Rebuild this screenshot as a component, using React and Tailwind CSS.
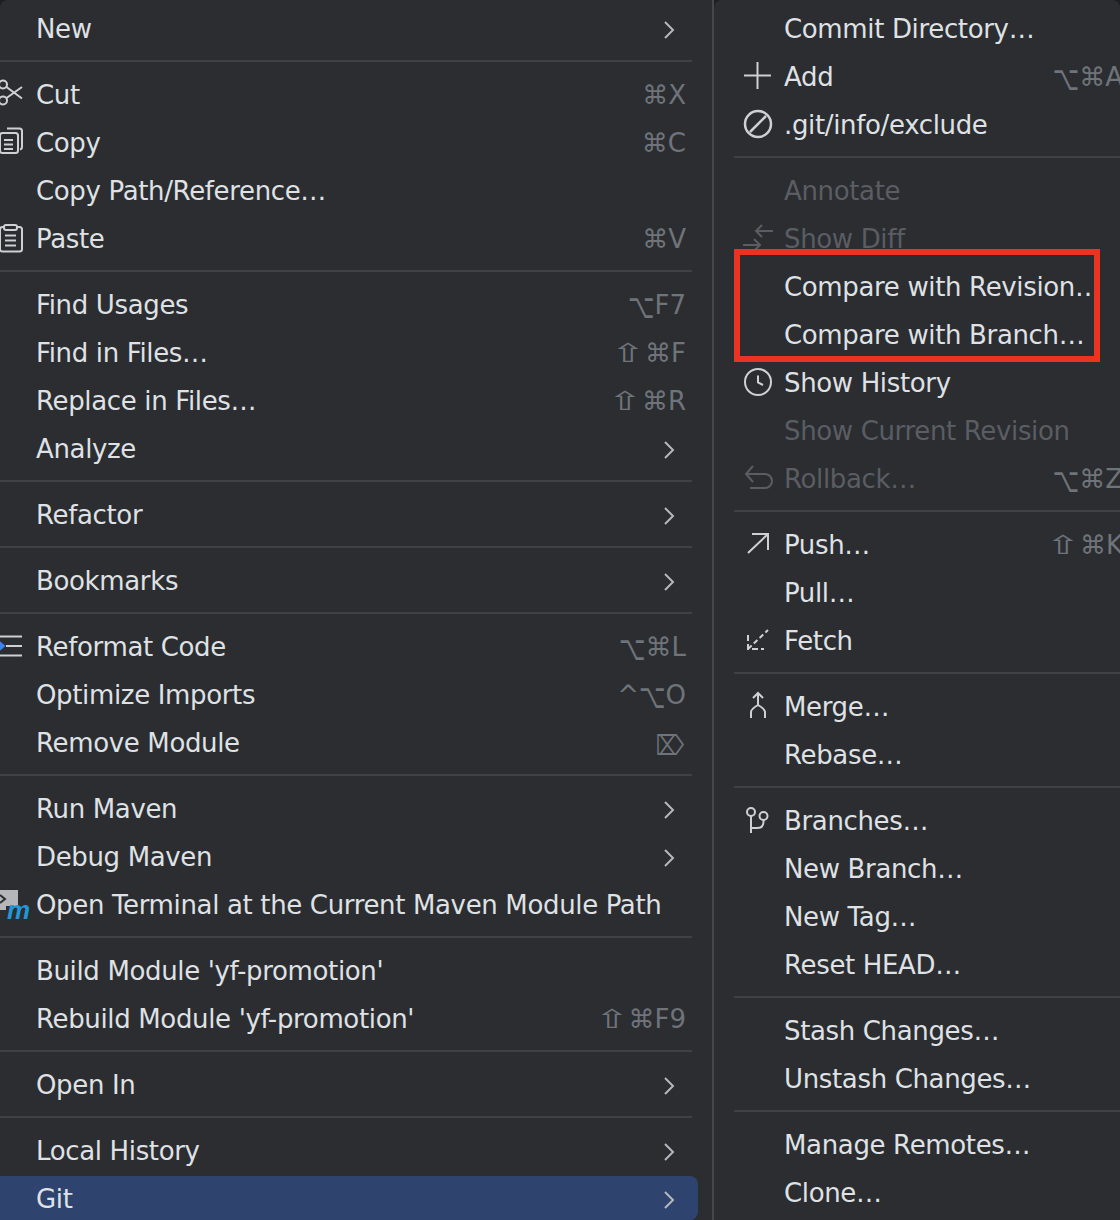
import React from "react";

const S = { fill: "none", stroke: "currentColor", strokeWidth: 2 };

// Menu icons, drawn on a 32px box
const icons = {
  scissors: (
    <g {...S}>
      <circle cx="13" cy="6.500" r="4" />
      <circle cx="13" cy="22.500" r="4" />
      <path d="M16.500 9L32 20.500M16.500 20L32 9" />
    </g>
  ),
  copy: (
    <g {...S}>
      <rect x="10" y="7" width="18" height="20" rx="2.5" />
      <path d="M17 2.500H29.500Q32 2.500 32 5V21Q32 23 30 23.500" />
      <path d="M14 14H23M14 18.500H23M14 23H23" />
    </g>
  ),
  paste: (
    <g {...S}>
      <path d="M14 5H12.500Q10 5 10 7.500V27Q10 29.500 12.500 29.500H29.500Q32 29.500 32 27V7.500Q32 5 29.500 5H27" />
      <rect x="14" y="3" width="13" height="5" rx="2" />
      <path d="M15 13.500H26M15 18.500H26M15 23.500H26" />
    </g>
  ),
  reformat: (
    <g>
      <path {...S} d="M9 6.500H32M16 16H32M9 25.500H32" />
      <path d="M9 10.500L15.500 16L9 21.500Z" fill="#3b82f6" />
    </g>
  ),
  maven: (
    <g>
      <rect x="10" y="2" width="18" height="20" fill="#b4b6ba" />
      <path d="M10 7L15 11L10 15" fill="none" stroke="#2b2d30" strokeWidth="2" />
      <rect x="16" y="18" width="16" height="6" fill="#2b2d30" />
      <text x="17" y="31" fontSize="26" fontStyle="italic" fontWeight="700" fill="#2396d8" fontFamily="'Liberation Sans', sans-serif">m</text>
    </g>
  ),
  plus: <path {...S} d="M2 15.500H29M15.500 2V29" />,
  exclude: (
    <g {...S} strokeWidth="2.500">
      <circle cx="16" cy="16" r="13" />
      <path d="M8 24L24 8" />
    </g>
  ),
  diff: <path {...S} d="M14 9H31M20 3L14 9L20 15M1 23H18M12 17L18 23L12 29" />,
  clock: (
    <g {...S}>
      <circle cx="16" cy="16" r="13" />
      <path d="M16 9.500V16.500L21 19" />
    </g>
  ),
  rollback: <path {...S} d="M11 4L4 12L11 20M4 12H23A7 7 0 0 1 23 26H8" />,
  push: <path {...S} d="M6 25L26 6M10 6H26V22" />,
  fetch: (
    <g {...S}>
      <path d="M6 25L26 6" strokeDasharray="5 3" />
      <path d="M6 11V25H22" strokeDasharray="6 3" />
    </g>
  ),
  merge: <path {...S} d="M16 3V15M11 8L16 3L21 8M9 28V22Q9 19 16 15Q23 19 23 22V28" />,
  branch: (
    <g {...S}>
      <circle cx="9" cy="8" r="4" />
      <circle cx="21.500" cy="12" r="4" />
      <path d="M9 12V29M21.500 16V18Q21.500 24 15 24H9" />
    </g>
  ),
};

const leftMenu = [
  { label: "New", arrow: true },
  "sep",
  { label: "Cut", icon: "scissors", keys: "⌘X" },
  { label: "Copy", icon: "copy", keys: "⌘C" },
  { label: "Copy Path/Reference…" },
  { label: "Paste", icon: "paste", keys: "⌘V" },
  "sep",
  { label: "Find Usages", keys: "⌥F7" },
  { label: "Find in Files…", keys: "⇧⌘F" },
  { label: "Replace in Files…", keys: "⇧⌘R" },
  { label: "Analyze", arrow: true },
  "sep",
  { label: "Refactor", arrow: true },
  "sep",
  { label: "Bookmarks", arrow: true },
  "sep",
  { label: "Reformat Code", icon: "reformat", keys: "⌥⌘L" },
  { label: "Optimize Imports", keys: "^⌥O" },
  { label: "Remove Module", keys: "⌦" },
  "sep",
  { label: "Run Maven", arrow: true },
  { label: "Debug Maven", arrow: true },
  { label: "Open Terminal at the Current Maven Module Path", icon: "maven" },
  "sep",
  { label: "Build Module 'yf-promotion'" },
  { label: "Rebuild Module 'yf-promotion'", keys: "⇧⌘F9" },
  "sep",
  { label: "Open In", arrow: true },
  "sep",
  { label: "Local History", arrow: true },
  { label: "Git", arrow: true, active: true },
];

const rightMenu = [
  { label: "Commit Directory…" },
  { label: "Add", icon: "plus", keys: "⌥⌘A" },
  { label: ".git/info/exclude", icon: "exclude" },
  "sep",
  { label: "Annotate", disabled: true },
  { label: "Show Diff", icon: "diff", disabled: true },
  { label: "Compare with Revision…" },
  { label: "Compare with Branch…" },
  { label: "Show History", icon: "clock" },
  { label: "Show Current Revision", disabled: true },
  { label: "Rollback…", icon: "rollback", keys: "⌥⌘Z", disabled: true },
  "sep",
  { label: "Push…", icon: "push", keys: "⇧⌘K" },
  { label: "Pull…" },
  { label: "Fetch", icon: "fetch" },
  "sep",
  { label: "Merge…", icon: "merge" },
  { label: "Rebase…" },
  "sep",
  { label: "Branches…", icon: "branch" },
  { label: "New Branch…" },
  { label: "New Tag…" },
  { label: "Reset HEAD…" },
  "sep",
  { label: "Stash Changes…" },
  { label: "Unstash Changes…" },
  "sep",
  { label: "Manage Remotes…" },
  { label: "Clone…" },
];

// The mac modifier glyphs differ in size from the letters next to them
function Keys({ keys }) {
  return [...keys].map((ch, i) => {
    if (ch === "⇧") return <span key={i} className="inline-block scale-x-[1.6] ml-[4px] mr-[6px]">{ch}</span>;
    if (ch === "⌥") return <span key={i} className="inline-block text-[23px] scale-y-[1.5]">{ch}</span>;
    if (ch === "⌦") return <span key={i} className="inline-block text-[20px] scale-y-[1.4] mr-[2px]">{ch}</span>;
    return <span key={i}>{ch}</span>;
  });
}

function MenuItem({ item, side }) {
  const left = side === "left";
  return (
    <div className={`h-12 py-0.5 ${left ? "w-[698px]" : "w-[409px]"}`}>
      <div className={`h-11 flex items-center rounded-r-lg ${item.active ? "bg-[#2e436e]" : ""}`}>
        <div className={`flex shrink-0 justify-end ${left ? "w-[36px] pr-[14px]" : "w-[70px] pr-[10px]"}`}>
          {item.icon && (
            <svg
              viewBox="0 0 32 32"
              className={`w-8 h-8 shrink-0 overflow-visible ${item.disabled ? "text-[#5a5d63]" : "text-[#ced0d6]"}`}
            >
              {icons[item.icon]}
            </svg>
          )}
        </div>
        <span className={`flex-1 pt-0.5 whitespace-nowrap tracking-[-0.35px] ${item.disabled ? "text-[#5a5d63]" : "text-[#dfe1e5]"}`}>
          {item.label}
        </span>
        {item.keys && (
          <span className={`whitespace-nowrap pt-0.5 text-[#6f737a] ${left ? "pr-[12px]" : ""}`}>
            <Keys keys={item.keys} />
          </span>
        )}
        {item.arrow && (
          <svg viewBox="0 0 12 18" className="w-3 h-[18px] mr-[23px] mt-1 text-[#b4b8bf]">
            <path d="M2 1L10 9L2 17" fill="none" stroke="currentColor" strokeWidth="2" />
          </svg>
        )}
      </div>
    </div>
  );
}

function Menu({ items, side }) {
  return (
    <div className="pt-1">
      {items.map((item, i) =>
        item === "sep" ? (
          <div key={i} className="py-2">
            <div className={`h-0.5 bg-[#3f4144] ${side === "left" ? "w-[692px]" : "ml-[20px]"}`} />
          </div>
        ) : (
          <MenuItem key={i} item={item} side={side} />
        )
      )}
    </div>
  );
}

export default function App() {
  return (
    <div className="relative w-[1120px] h-[1220px] overflow-hidden flex bg-[#1e1f22] font-['DejaVu_Sans',sans-serif] text-[26px]">
      {/* Main context menu */}
      <div className="w-[712px] h-full overflow-hidden bg-[#2b2d30] rounded-tl-lg">
        <Menu items={leftMenu} side="left" />
      </div>
      <div className="w-0.5 bg-[#45474a]" />

      {/* Git submenu */}
      <div className="flex-1 h-full overflow-hidden bg-[#2b2d30] rounded-t-lg">
        <Menu items={rightMenu} side="right" />
      </div>

      {/* Red annotation box drawn over the screenshot */}
      <div className="absolute left-[734px] top-[249px] w-[366px] h-[113px] border-[6px] border-[#ea3323]" />
    </div>
  );
}
